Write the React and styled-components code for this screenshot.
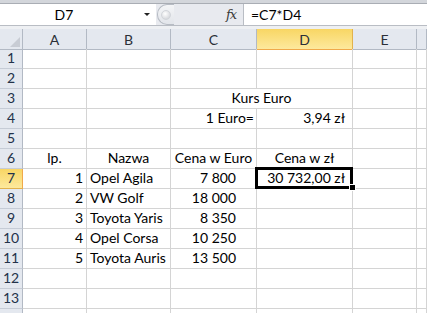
import styled, { createGlobalStyle } from "styled-components";

const GlobalStyle = createGlobalStyle`
  html, body {
    margin: 0;
    padding: 0;
    background: #ffffff;
    overflow: hidden;
  }
  body {
    font-family: Lato, "Open Sans", sans-serif;
  }
`;

const COLS = ["A", "B", "C", "D", "E", ""];
const COL_WIDTHS = "23px 64px 84px 86px 96px 64px 1fr";

// each row: cells A..F, undefined = covered by a merged cell
const rows = [
  [],
  [],
  [null, null, { text: "Kurs Euro", align: "center", span: 2 }, undefined, null, null],
  [null, null, { text: "1 Euro=", align: "right", pad: 2 }, { text: "3,94 zł", align: "right", pad: 7 }, null, null],
  [],
  [
    { text: "lp.", align: "center" },
    { text: "Nazwa", align: "center" },
    { text: "Cena w Euro", align: "center" },
    { text: "Cena w zł", align: "center" },
    null,
    null,
  ],
  [
    { text: "1", align: "right", pad: 3 },
    { text: "Opel Agila", align: "left", pad: 3 },
    { text: "7 800", align: "right", pad: 20 },
    { text: "30 732,00 zł", align: "right", pad: 7, selected: true },
    null,
    null,
  ],
  [
    { text: "2", align: "right", pad: 3 },
    { text: "VW Golf", align: "left", pad: 3 },
    { text: "18 000", align: "right", pad: 20 },
    null,
    null,
    null,
  ],
  [
    { text: "3", align: "right", pad: 3 },
    { text: "Toyota Yaris", align: "left", pad: 3 },
    { text: "8 350", align: "right", pad: 20 },
    null,
    null,
    null,
  ],
  [
    { text: "4", align: "right", pad: 3 },
    { text: "Opel Corsa", align: "left", pad: 3 },
    { text: "10 250", align: "right", pad: 20 },
    null,
    null,
    null,
  ],
  [
    { text: "5", align: "right", pad: 3 },
    { text: "Toyota Auris", align: "left", pad: 3 },
    { text: "13 500", align: "right", pad: 20 },
    null,
    null,
    null,
  ],
  [],
  [],
  [],
];

const Window = styled.div`
  width: 427px;
  height: 313px;
  overflow: hidden;
  background: #ffffff;
`;

const TopBand = styled.div`
  height: 3px;
  background: #d3d6db;
  border-bottom: 1px solid #a9adb4;
`;

const FormulaBar = styled.div`
  display: flex;
  height: 21px;
  border-bottom: 1px solid #b9bdc4;
  background: #e8eaef;
`;

const NameBox = styled.div`
  width: 156px;
  display: flex;
  align-items: center;
  background: #ffffff;
`;

const NameText = styled.div`
  flex: 1;
  text-align: center;
  font-size: 14px;
  color: #000;
  margin-right: 16px;
`;

const DropArrow = styled.div`
  width: 0;
  height: 0;
  border-left: 3px solid transparent;
  border-right: 3px solid transparent;
  border-top: 3px solid #222;
  margin-right: 6px;
`;

const Splitter = styled.div`
  width: 16px;
  margin-left: 1px;
  border: 1px solid #b7bcc4;
  border-right: none;
  border-radius: 10px 0 0 10px;
  background: linear-gradient(#f4f5f7, #e2e5ea);
  display: flex;
  align-items: center;
  justify-content: center;
`;

const Knob = styled.div`
  width: 8px;
  height: 8px;
  border-radius: 50%;
  background: radial-gradient(circle at 40% 35%, #ffffff, #c9ccd2);
  border: 1px solid #d2d5da;
`;

const Spacer = styled.div`
  flex: 0 0 45px;
`;

const FxBox = styled.div`
  width: 24px;
  display: flex;
  align-items: center;
  justify-content: center;
  font-family: "DejaVu Serif", "Liberation Serif", serif;
  font-style: italic;
  font-size: 13px;
  color: #3a3a3a;
  letter-spacing: -1px;
`;

const FormulaInput = styled.div`
  flex: 1;
  background: #ffffff;
  border-left: 1px solid #b9bdc4;
  display: flex;
  align-items: center;
  padding-left: 7px;
  font-size: 14px;
  color: #000;
`;

const Gap = styled.div`
  height: 3px;
  background: #eef0f3;
`;

const Sheet = styled.div`
  display: grid;
  grid-template-columns: ${COL_WIDTHS};
  grid-auto-rows: 20px;
  font-size: 14px;
`;

const CornerCell = styled.div`
  height: 21px;
  box-sizing: border-box;
  background: #e4e8ef;
  border-right: 1px solid #b2b9c4;
  border-bottom: 1px solid #b2b9c4;
  position: relative;
`;

const CornerTriangle = styled.div`
  position: absolute;
  right: 2px;
  bottom: 2px;
  width: 0;
  height: 0;
  border-left: 10px solid transparent;
  border-bottom: 10px solid #c8ccd4;
`;

const ColHeader = styled.div`
  height: 21px;
  box-sizing: border-box;
  display: flex;
  align-items: center;
  justify-content: center;
  color: #2b2f38;
  background: ${(p) => (p.$active ? "linear-gradient(#f8d664, #fde99d)" : "#e4e8ef")};
  border-right: 1px solid ${(p) => (p.$active ? "#e2b24c" : "#b2b9c4")};
  border-bottom: 1px solid ${(p) => (p.$active ? "#f0a94a" : "#b2b9c4")};
  padding-top: 1px;
`;

const RowHeader = styled.div`
  box-sizing: border-box;
  display: flex;
  align-items: flex-end;
  justify-content: center;
  padding-bottom: 1px;
  line-height: 18px;
  color: #23324a;
  background: ${(p) => (p.$active ? "linear-gradient(#f8d664, #fde99d)" : "#e4e8ef")};
  border-right: 1px solid ${(p) => (p.$active ? "#f0a94a" : "#b2b9c4")};
  border-bottom: 1px solid ${(p) => (p.$active ? "#e2b24c" : "#c6ccd6")};
`;

const Cell = styled.div`
  box-sizing: border-box;
  position: relative;
  grid-column: span ${(p) => p.$span || 1};
  display: flex;
  align-items: flex-end;
  padding-bottom: 1px;
  justify-content: ${(p) =>
    p.$align === "right" ? "flex-end" : p.$align === "center" ? "center" : "flex-start"};
  padding-left: ${(p) => (p.$align === "left" ? p.$pad || 0 : 0)}px;
  padding-right: ${(p) => (p.$align === "right" ? p.$pad || 0 : 0)}px;
  border-right: 1px solid #d4d4d4;
  border-bottom: 1px solid #d4d4d4;
  color: #000;
  white-space: nowrap;
  line-height: 18px;

  ${(p) =>
    p.$selected &&
    `
    &::after {
      content: "";
      position: absolute;
      left: -2px;
      top: -2px;
      right: -1px;
      bottom: -1px;
      border: 3px solid #000;
      box-sizing: border-box;
    }
    &::before {
      content: "";
      position: absolute;
      right: -4px;
      bottom: -3px;
      width: 5px;
      height: 5px;
      background: #000;
      border: 1px solid #fff;
      z-index: 2;
    }
  `}
`;

const App = () => {
  return (
    <>
      <GlobalStyle />
      <Window>
        <TopBand />
        <FormulaBar>
          <NameBox>
            <NameText>D7</NameText>
            <DropArrow />
          </NameBox>
          <Splitter>
            <Knob />
          </Splitter>
          <Spacer />
          <FxBox>fx</FxBox>
          <FormulaInput>=C7*D4</FormulaInput>
        </FormulaBar>
        <Gap />
        <Sheet>
          <CornerCell>
            <CornerTriangle />
          </CornerCell>
          {COLS.map((c, i) => (
            <ColHeader key={i} $active={c === "D"}>
              {c}
            </ColHeader>
          ))}
          {rows.map((row, r) => {
            const cells = [];
            for (let i = 0; i < 6; i++) {
              const cell = row[i];
              if (cell === undefined && row.length) continue; // covered by merge
              cells.push(
                <Cell
                  key={`${r}-${i}`}
                  $align={cell?.align}
                  $pad={cell?.pad}
                  $span={cell?.span}
                  $selected={cell?.selected}
                >
                  {cell?.text}
                </Cell>
              );
            }
            // last row is only a sliver at the bottom edge, its number is not visible
            const label = r < rows.length - 1 ? r + 1 : "";
            return [
              <RowHeader key={`h${r}`} $active={r === 6}>
                {label}
              </RowHeader>,
              ...cells,
            ];
          })}
        </Sheet>
      </Window>
    </>
  );
};

export default App;
